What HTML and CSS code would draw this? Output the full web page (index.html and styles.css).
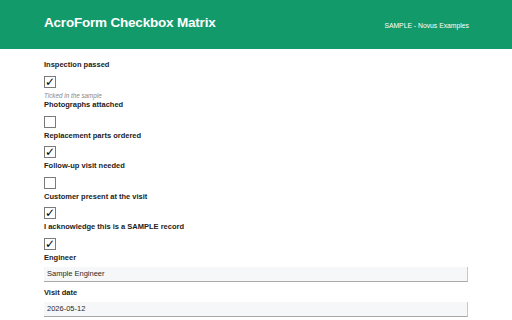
FILE: index.html
```html
<!DOCTYPE html>
<html>
<head>
<meta charset="utf-8">
<link rel="stylesheet" href="styles.css">
</head>
<body>
<header class="top">
  <h1 class="title">AcroForm Checkbox Matrix</h1>
  <span class="meta">SAMPLE - Novus Examples</span>
</header>
<main class="form">
  <div class="field">
    <div class="label">Inspection passed</div>
    <span class="box checked">&#10003;</span>
    <div class="hint">Ticked in the sample</div>
  </div>
  <div class="field">
    <div class="label">Photographs attached</div>
    <span class="box"></span>
  </div>
  <div class="field">
    <div class="label">Replacement parts ordered</div>
    <span class="box checked">&#10003;</span>
  </div>
  <div class="field">
    <div class="label">Follow-up visit needed</div>
    <span class="box"></span>
  </div>
  <div class="field">
    <div class="label">Customer present at the visit</div>
    <span class="box checked">&#10003;</span>
  </div>
  <div class="field">
    <div class="label">I acknowledge this is a SAMPLE record</div>
    <span class="box checked">&#10003;</span>
  </div>
  <div class="field text">
    <div class="label">Engineer</div>
    <div class="input">Sample Engineer</div>
  </div>
  <div class="field text">
    <div class="label">Visit date</div>
    <div class="input">2026-05-12</div>
  </div>
</main>
</body>
</html>
```
FILE: styles.css
```css
html, body { margin: 0; padding: 0; background: #fff; }
body { font-family: "Liberation Sans", Arial, sans-serif; color: #222; }
.top {
  height: 49px;
  background: #129a6a;
  display: flex;
  align-items: center;
  justify-content: space-between;
  padding: 0 43px 0 44px;
  box-sizing: border-box;
}
.title { margin: 0; font-size: 13.5px; letter-spacing: -0.2px; font-weight: bold; color: #fff; padding-bottom: 4px; }
.meta { font-size: 6.8px; color: #fff; padding-top: 2px; }
.form { padding: 11px 44px 0 44px; display: flex; flex-direction: column; }
.field { display: flex; flex-direction: column; align-items: flex-start; }
.label { font-size: 7.5px; font-weight: bold; line-height: 10px; height: 10px; margin-bottom: 5.5px; }
.field:first-child .label { margin-bottom: 6px; }
.box {
  width: 12px; height: 12px; box-sizing: border-box;
  border: 1px solid #7a7a7a; background: #fff;
  display: flex; align-items: center; justify-content: center;
  font-size: 12px; font-weight: bold; line-height: 1; color: #000; font-family: "DejaVu Sans", sans-serif;
  margin-bottom: 3px;
}
.hint { font-size: 6.3px; font-style: italic; color: #888; line-height: 8px; margin-top: 1px; }
.field.text { align-self: stretch; }
.field.text .label { margin-bottom: 4px; }
.input {
  align-self: stretch;
  height: 15px; box-sizing: border-box;
  background: #f6f7f8;
  border-right: 1px solid #c8c8c8;
  border-bottom: 1px solid #a8a8a8;
  font-size: 7.5px; color: #2a2a2a; line-height: 14px; padding-left: 3px;
  margin-bottom: 6.5px;
}
```
